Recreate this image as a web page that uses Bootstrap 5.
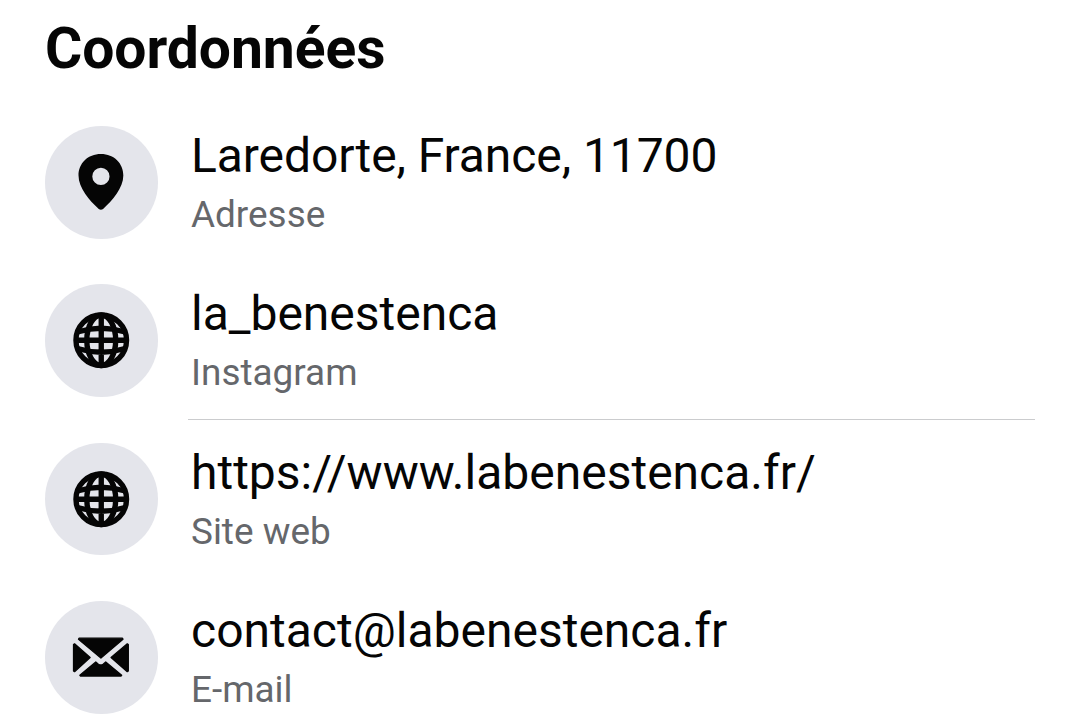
<!DOCTYPE html>
<html lang="fr">
<head>
<meta charset="utf-8">
<meta name="viewport" content="width=device-width, initial-scale=1">
<title>Coordonnées</title>
<link href="https://cdn.jsdelivr.net/npm/bootstrap@5.3.0/dist/css/bootstrap.min.css" rel="stylesheet">
<style>
body { font-family: Roboto, "Liberation Sans", sans-serif; color: #050505; background: #fff; overflow: hidden; }
.contact-page { padding: 15px 45px 0; }
.contact-title { font-size: 57px; line-height: 68px; margin-bottom: 43px; letter-spacing: -.05px; }
.contact-row { height: 158.4px; }
.contact-icon { width: 112.5px; height: 112.5px; background: #e4e5eb; }
.contact-icon svg { width: 112.5px; height: 112.5px; }
.contact-text { margin-left: 33.5px; padding-top: 2px; }
.contact-value { font-size: 48px; line-height: 56px; }
.contact-value.place { letter-spacing: -.08px; }
.contact-kind { font-size: 36.9px; line-height: 44px; margin-top: 9px; color: #65676b; }
.contact-divider { height: 1px; background: #cbccce; margin: 24px 0 0 -3.5px; }
</style>
</head>
<body>
<svg class="d-none">
  <symbol id="globe" viewBox="-56.5 -56.5 113 113">
    <g fill="none" stroke="#050505" stroke-width="5.4">
      <circle r="25.4"/>
      <ellipse rx="14.5" ry="25.4"/>
      <path d="M0-27V27M-26 0H26M-23-8.500Q0-15.500 23-8.500M-23 8.500Q0 15.500 23 8.500"/>
    </g>
  </symbol>
</svg>
<main class="contact-page">
  <h1 class="contact-title fw-bold">Coordonnées</h1>
  <div class="contact-row d-flex align-items-start">
    <div class="contact-icon rounded-circle flex-shrink-0">
      <svg class="d-block" viewBox="15 17 339 339"><path fill="#050505" fill-rule="evenodd" d="M183.500 101C144 101 116 129 116 166C116 204 149 241 177 267Q183.500 272 190 267C218 241 251 204 251 166C251 129 223 101 183.500 101ZM183.500 143A26 26 0 1 1 183.500 195A26 26 0 1 1 183.500 143Z"/></svg>
    </div>
    <div class="contact-text flex-grow-1">
      <div class="contact-value place">Laredorte, France, 11700</div>
      <div class="contact-kind">Adresse</div>
    </div>
  </div>
  <div class="contact-row d-flex align-items-start">
    <div class="contact-icon rounded-circle flex-shrink-0">
      <svg class="d-block"><use href="#globe"/></svg>
    </div>
    <div class="contact-text flex-grow-1">
      <div class="contact-value">la_benestenca</div>
      <div class="contact-kind">Instagram</div>
      <div class="contact-divider"></div>
    </div>
  </div>
  <div class="contact-row d-flex align-items-start">
    <div class="contact-icon rounded-circle flex-shrink-0">
      <svg class="d-block"><use href="#globe"/></svg>
    </div>
    <div class="contact-text flex-grow-1">
      <div class="contact-value">https://www.labenestenca.fr/</div>
      <div class="contact-kind">Site web</div>
    </div>
  </div>
  <div class="contact-row d-flex align-items-start">
    <div class="contact-icon rounded-circle flex-shrink-0">
      <svg class="d-block" viewBox="15 14 339 339"><g fill="#050505" stroke="#050505" stroke-width="4" stroke-linejoin="round"><path d="M118 126H248L250 129L183.500 186L116 129Z"/><path d="M101 145L104 143L151 184L104 227L101 225Z"/><path d="M266 145L263 143L214 184L263 227L266 225Z"/><path d="M168 198L175 204Q183.500 210 191 204L198 198L246 238L244 240H122L120 238Z"/></g></svg>
    </div>
    <div class="contact-text flex-grow-1">
      <div class="contact-value">contact@labenestenca.fr</div>
      <div class="contact-kind">E-mail</div>
    </div>
  </div>
</main>
<script src="https://cdn.jsdelivr.net/npm/bootstrap@5.3.0/dist/js/bootstrap.bundle.min.js"></script>
</body>
</html>
